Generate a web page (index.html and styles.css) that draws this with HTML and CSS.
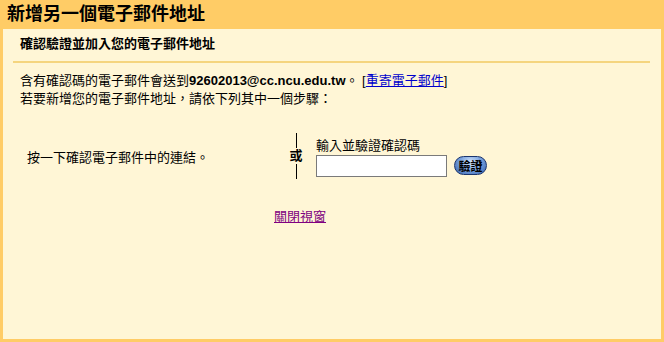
FILE: index.html
```html
<!DOCTYPE html>
<html lang="zh-Hant">
<head>
  <meta charset="UTF-8" />
  <title>新增另一個電子郵件地址</title>
  <link rel="stylesheet" href="styles.css">
</head>
<body>
  <div class="title">新增另一個電子郵件地址</div>

  <div class="panel">
    <div class="sub">確認驗證並加入您的電子郵件地址</div>

    <div class="info">
      含有確認碼的電子郵件會送到<b>92602013@cc.ncu.edu.tw</b>。 [<a href="#" class="resend">重寄電子郵件</a>]<br>
      若要新增您的電子郵件地址，請依下列其中一個步驟：
    </div>

    <div class="steps">
      <div class="click">按一下確認電子郵件中的連結。</div>
      <div class="or">
        <span class="bar"></span>
        <b>或</b>
        <span class="bar"></span>
      </div>
      <div class="enter">
        <label for="code">輸入並驗證確認碼</label>
        <div class="enter-row">
          <input type="text" id="code">
          <button class="verify">驗證</button>
        </div>
      </div>
    </div>

    <div class="close"><a href="#" class="visited">關閉視窗</a></div>
  </div>
</body>
</html>
```

FILE: styles.css
```css
html, body { height: 100%; }
body {
  margin: 0;
  background-color: #ffcc66;
  color: #000;
  font-family: "Liberation Sans", "Noto Sans CJK TC", sans-serif;
  font-size: 13px;
  overflow: hidden;
}
.title {
  height: 29px;
  line-height: 29px;
  padding-left: 7px;
  font-size: 18px;
  font-weight: bold;
}
.panel {
  margin: 0 3px;
  height: 310px;
  background-color: #fff6d6;
}
.sub {
  height: 32px;
  line-height: 30px;
  margin: 0 11px 0 10px;
  padding-left: 7px;
  font-weight: bold;
  border-bottom: 2px solid #f5d57f;
}
.info {
  margin-top: 9px;
  padding-left: 17px;
  line-height: 18px;
}
a { color: #0000cc; }
a.visited { color: #800080; }
.steps {
  display: flex;
  align-items: center;
  margin-top: 25px;
  padding-left: 24px;
}
.click {
  width: 263px;
  padding-top: 1px;
}
.or {
  display: flex;
  flex-direction: column;
  align-items: center;
  width: 12px;
}
.or b {
  line-height: 16px;
}
.bar {
  display: block;
  width: 1px;
  height: 15px;
  background: #000;
  margin-left: 1px;
}
.enter {
  margin-left: 14px;
  padding-top: 2px;
}
.enter label {
  display: block;
  line-height: 16px;
}
.enter-row {
  display: flex;
  align-items: center;
  margin-top: 1px;
}
.enter input {
  width: 125px;
  height: 18px;
  margin: 0;
  padding: 1px 2px;
  border: 1px solid #7a7a7a;
  background: #fff;
  font-size: 13px;
}
.verify {
  margin-left: 7px;
  width: 33px;
  height: 19px;
  padding: 0;
  border: 1px solid #1b356e;
  border-radius: 10px;
  background: radial-gradient(ellipse at 50% 30%, #d6e6fb 0%, #7ea6e0 45%, #2f5cab 100%);
  font-family: "Noto Sans CJK TC", sans-serif;
  font-size: 12px;
  font-weight: bold;
  line-height: 16px;
  color: #000;
}
.close {
  margin-top: 27px;
  padding-left: 271px;
}
```
